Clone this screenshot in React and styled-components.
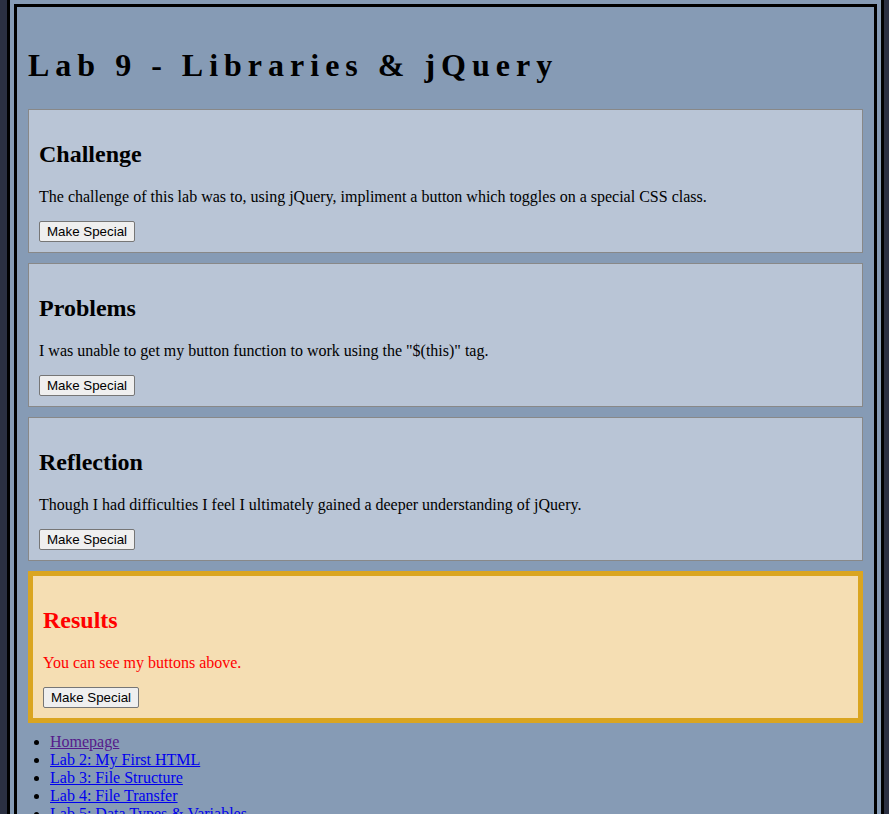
import React, { useState } from "react";
import styled, { createGlobalStyle } from "styled-components";

const GlobalStyle = createGlobalStyle`
  html {
    background-color: #2b3042;
  }

  body {
    margin: 0;
    font-family: "Liberation Serif", "Times New Roman", serif;
    font-size: 16px;
    color: #000;
  }
`;

const sections = [
  {
    title: "Challenge",
    text: "The challenge of this lab was to, using jQuery, impliment a button which toggles on a special CSS class.",
  },
  {
    title: "Problems",
    text: 'I was unable to get my button function to work using the "$(this)" tag.',
  },
  {
    title: "Reflection",
    text: "Though I had difficulties I feel I ultimately gained a deeper understanding of jQuery.",
  },
  {
    title: "Results",
    text: "You can see my buttons above.",
    special: true,
  },
];

const links = [
  { label: "Homepage", visited: true },
  { label: "Lab 2: My First HTML" },
  { label: "Lab 3: File Structure" },
  { label: "Lab 4: File Transfer" },
  { label: "Lab 5: Data Types & Variables" },
  { label: "Lab 6: Functions" },
  { label: "Lab 7: Objects" },
  { label: "Lab 8: The DOM" },
];

const Section = ({ title, text, special }) => {
  // each panel toggles its own "special" class
  const [isSpecial, setIsSpecial] = useState(!!special);

  return (
    <Panel $special={isSpecial}>
      <h2>{title}</h2>
      <p>{text}</p>
      <Button onClick={() => setIsSpecial(!isSpecial)}>Make Special</Button>
    </Panel>
  );
};

const App = () => {
  return (
    <>
      <GlobalStyle />
      <Wrapper>
        <Title>Lab 9 - Libraries &amp; jQuery</Title>
        {sections.map((s) => (
          <Section key={s.title} {...s} />
        ))}
        <NavList>
          {links.map((l) => (
            <li key={l.label}>
              <NavLink href="#" $visited={l.visited}>
                {l.label}
              </NavLink>
            </li>
          ))}
        </NavList>
      </Wrapper>
    </>
  );
};

export default App;

const Wrapper = styled.div`
  margin: -3px 5px 0 7px;
  padding: 10px 11px 20px 11px;
  border: 10px double #000;
  background-color: #869bb5;
  min-height: 900px;
`;

const Title = styled.h1`
  margin: 30px 0 25px 0;
  font-size: 32px;
  font-weight: bold;
  letter-spacing: 6px;
  line-height: 1.15;
`;

const Panel = styled.div`
  margin-bottom: 10px;
  padding: 11px 10px 10px;
  border: ${(p) => (p.$special ? "5px solid #daa520" : "1px solid #888888")};
  background-color: ${(p) => (p.$special ? "#f5deb3" : "#b9c5d6")};
  color: ${(p) => (p.$special ? "#ff0000" : "#000")};

  & h2 {
    margin: 20px 0;
    font-size: 24px;
    font-weight: bold;
    line-height: 1.15;
  }

  & p {
    margin: 16px 0 14px;
    line-height: 1.15;
  }
`;

const Button = styled.button`
  display: inline-block;
  margin: 0;
  padding: 2px 7px;
  font-family: "Liberation Sans", Arial, sans-serif;
  font-size: 13.333px;
  color: #000;
  background-color: #efefef;
  border: 1px solid #767676;
  border-radius: 2px;
  line-height: normal;
  cursor: pointer;
`;

const NavList = styled.ul`
  margin: 0;
  padding-left: 22px;
  line-height: 18px;
`;

const NavLink = styled.a`
  color: ${(p) => (p.$visited ? "#551a8b" : "#0000ee")};
  text-decoration: underline;
`;
